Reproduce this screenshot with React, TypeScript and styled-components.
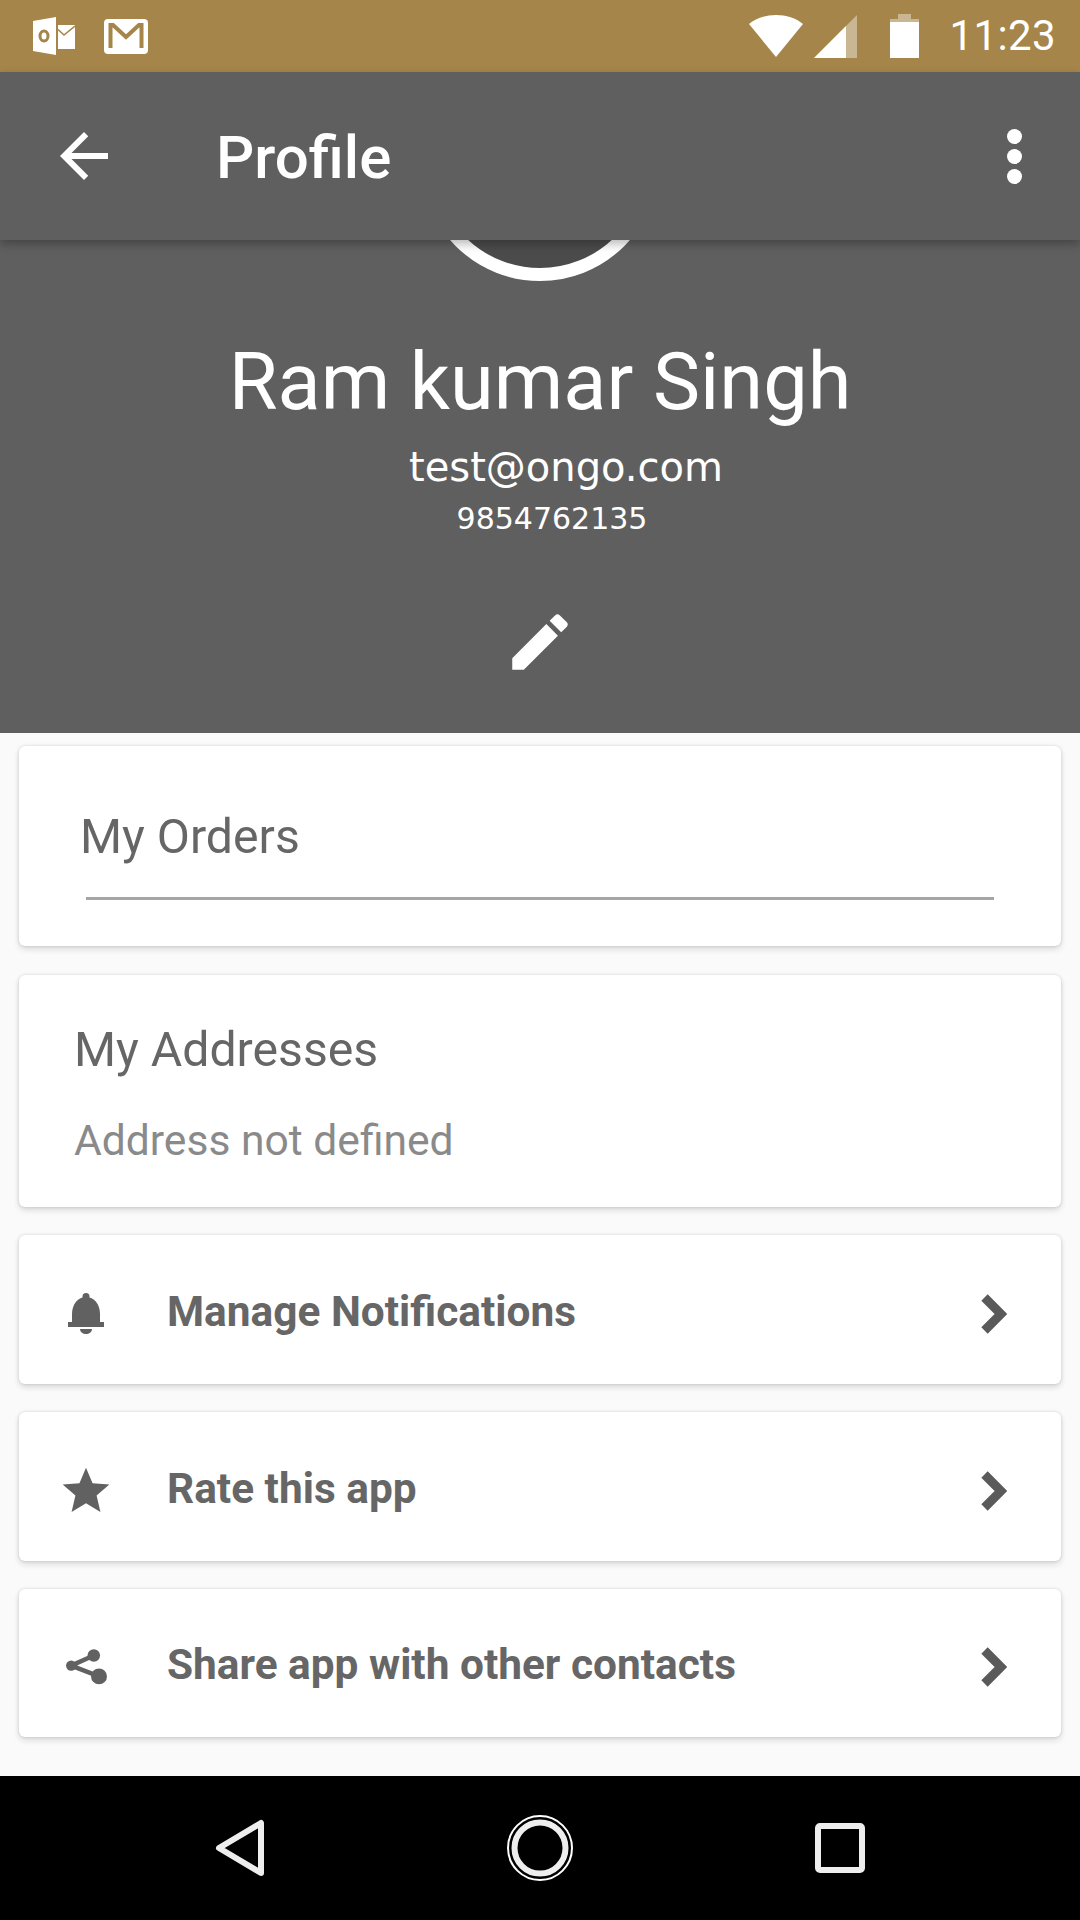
import React from "react";
import styled, { createGlobalStyle } from "styled-components";

const GlobalStyle = createGlobalStyle`
  html, body {
    margin: 0;
    padding: 0;
    background: #fafafa;
  }
  * {
    box-sizing: border-box;
  }
`;

const Page = styled.div`
  width: 1080px;
  height: 1920px;
  display: flex;
  flex-direction: column;
  overflow: hidden;
  background: #fafafa;
  font-family: Roboto, "Liberation Sans", sans-serif;
`;

const StatusBar = styled.div`
  height: 72px;
  flex: none;
  display: flex;
  align-items: center;
  padding: 0 24px 0 33px;
  background: #a5854a;
  color: #fff;
`;

const NotificationIcons = styled.div`
  display: flex;
  align-items: center;
  gap: 29px;
  flex: 1;
`;

const SystemIcons = styled.div`
  display: flex;
  align-items: center;
`;

const Clock = styled.span`
  margin-left: 30px;
  font-size: 42px;
  line-height: 48px;
  letter-spacing: 0.4px;
`;

const Toolbar = styled.div`
  position: relative;
  z-index: 1;
  height: 168px;
  flex: none;
  display: flex;
  align-items: center;
  padding: 0 58px 0 48px;
  background: #5f5f5f;
  box-shadow: 0 4px 9px rgba(0, 0, 0, 0.28);
  color: #fff;
`;

const ToolbarTitle = styled.h1`
  flex: 1;
  margin: 4px 0 0 96px;
  font-size: 60px;
  font-weight: 500;
  line-height: 68px;
`;

const MenuDots = styled.div`
  display: flex;
  flex-direction: column;
  gap: 5px;
`;

const Dot = styled.span`
  width: 15px;
  height: 15px;
  border-radius: 50%;
  background: #fff;
`;

const ProfileHeader = styled.div`
  height: 493px;
  flex: none;
  display: flex;
  flex-direction: column;
  align-items: center;
  overflow: hidden;
  background: #5f5f5f;
  color: #fff;
`;

const Avatar = styled.div`
  width: 238px;
  height: 238px;
  flex: none;
  margin-top: -197px;
  border: 13px solid #fff;
  border-radius: 50%;
  background: #4b4b4b;
`;

const Name = styled.div`
  margin-top: 55px;
  font-size: 79.3px;
  line-height: 92px;
`;

const Email = styled.div`
  margin: 16px 0 0 52px;
  font-family: "DejaVu Sans", sans-serif;
  font-size: 40px;
  line-height: 46px;
`;

const Phone = styled.div`
  margin: 9px 0 0 24px;
  font-family: "DejaVu Sans", sans-serif;
  font-size: 30px;
  line-height: 40px;
`;

const EditButton = styled.div`
  margin-top: 66px;
  display: flex;
`;

const CardList = styled.div`
  flex: 1;
  display: flex;
  flex-direction: column;
  padding: 13px 19px 0 19px;
`;

const Card = styled.div<{ $height: number; $gap: number }>`
  height: ${(p) => p.$height}px;
  flex: none;
  margin-bottom: ${(p) => p.$gap}px;
  border-radius: 6px;
  background: #fff;
  box-shadow: 0 3px 6px rgba(0, 0, 0, 0.14), 0 0 3px rgba(0, 0, 0, 0.14);
`;

const OrdersCard = styled(Card)`
  padding: 63px 67px 0 61px;
`;

const CardTitle = styled.div`
  font-size: 48.2px;
  line-height: 56px;
  color: #666;
`;

const OrdersRule = styled.div`
  height: 3px;
  margin: 32px 0 0 6px;
  background: #a5a5a5;
`;

const AddressCard = styled(Card)`
  padding: 47px 40px 0 55px;
`;

const AddressText = styled.div`
  margin-top: 37px;
  font-size: 42.6px;
  line-height: 50px;
  color: #8a8a8a;
`;

const RowCard = styled(Card)`
  display: flex;
  align-items: center;
`;

const RowIcon = styled.div`
  width: 148px;
  padding: 8px 14px 0 0;
  flex: none;
  display: flex;
  justify-content: center;
`;

const RowLabel = styled.div`
  flex: 1;
  padding-top: 4px;
  font-size: 42.4px;
  font-weight: 700;
  line-height: 50px;
  color: #666;
`;

const RowChevron = styled.div`
  width: 135px;
  padding-top: 8px;
  flex: none;
  display: flex;
  justify-content: center;
`;

const NavBar = styled.div`
  height: 144px;
  flex: none;
  display: flex;
  align-items: center;
  padding: 0 215px 0 215px;
  justify-content: space-between;
  background: #000;
`;

const BellIcon = () => (
  <svg width="36" height="41" viewBox="0 0 36 41">
    <circle cx="18" cy="3.5" r="3.5" fill="#616161" />
    <path d="M4 29V21C4 11 10 4 18 4s14 7 14 17v8z" fill="#616161" />
    <rect y="29" width="36" height="5" fill="#616161" />
    <path d="M12 36h12c0 3-3 5-6 5s-6-2-6-5z" fill="#616161" />
  </svg>
);

const StarIcon = () => (
  <svg width="56" height="56" viewBox="0 0 24 24" fill="#616161">
    <path d="M12 17.27L18.18 21l-1.64-7.03L22 9.24l-7.19-.61L12 2 9.19 8.63 2 9.24l5.46 4.73L5.82 21z" />
  </svg>
);

const ShareIcon = () => (
  <svg width="41" height="36" viewBox="0 0 118 102" fill="#616161">
    <path d="M15 47L80 18M15 47L95 78" stroke="#616161" strokeWidth="13" />
    <circle cx="15" cy="47" r="15" />
    <circle cx="80" cy="18" r="18" />
    <circle cx="95" cy="78" r="23" />
  </svg>
);

const Chevron = () => (
  <svg width="26" height="40" viewBox="0 0 26 40">
    <path d="M3.5 3.5L20 20 3.5 36.5" fill="none" stroke="#5a5a5a" strokeWidth="9" />
  </svg>
);

const OutlookIcon = () => (
  <svg width="42" height="38" viewBox="0 0 42 38">
    <path d="M0 4L23 0V38L0 34z" fill="#fff" />
    <ellipse cx="11" cy="19" rx="4" ry="5" fill="none" stroke="#a5854a" strokeWidth="3" />
    <path d="M25 8H42V32H25z" fill="#fff" />
    <path d="M25 12.5L31 18 42 9" fill="none" stroke="#a5854a" strokeWidth="1.6" />
  </svg>
);

const GmailIcon = () => (
  <svg width="44" height="35" viewBox="0 0 44 35">
    <rect width="44" height="35" rx="4" fill="#fff" />
    <path d="M6.5 29V6H9L22 18 35 6h2.5v23" fill="none" stroke="#a5854a" strokeWidth="4" />
  </svg>
);

const WifiIcon = () => (
  <svg width="54" height="42" viewBox="0 0 54 42">
    <path d="M27 42L0 9C7 3 17 0 27 0s20 3 27 9z" fill="#fff" />
  </svg>
);

const SignalIcon = () => (
  <svg width="43" height="43" viewBox="0 0 43 43" style={{ marginLeft: 11 }}>
    <path d="M0 43L43 0V43z" fill="#fff" fillOpacity="0.4" />
    <path d="M0 43L32 11V43z" fill="#fff" />
  </svg>
);

const BatteryIcon = () => (
  <svg width="29" height="44" viewBox="0 0 29 44" style={{ marginLeft: 33 }}>
    <path d="M8 0h13v5h8v6H0V5h8z" fill="#fff" fillOpacity="0.4" />
    <rect y="8" width="29" height="36" fill="#fff" />
  </svg>
);

const BackNavIcon = () => (
  <svg width="50" height="58" viewBox="0 0 50 58">
    <path d="M46 4V54L4 29z" fill="none" stroke="#eee" strokeWidth="6" strokeLinejoin="round" />
  </svg>
);

const HomeNavIcon = () => (
  <svg width="66" height="66" viewBox="0 0 66 66">
    <circle cx="33" cy="33" r="32" fill="none" stroke="#fff" strokeWidth="2" />
    <circle cx="33" cy="33" r="25.5" fill="none" stroke="#eee" strokeWidth="6" />
  </svg>
);

const RecentNavIcon = () => (
  <svg width="50" height="50" viewBox="0 0 50 50">
    <rect x="3" y="3" width="44" height="44" rx="2" fill="none" stroke="#eee" strokeWidth="6" />
  </svg>
);

const ROWS = [
  { label: "Manage Notifications", icon: <BellIcon />, height: 149, gap: 28 },
  { label: "Rate this app", icon: <StarIcon />, height: 149, gap: 28 },
  { label: "Share app with other contacts", icon: <ShareIcon />, height: 148, gap: 0 },
];

const App = () => (
  <Page>
    <GlobalStyle />
    <StatusBar>
      <NotificationIcons>
        <OutlookIcon />
        <GmailIcon />
      </NotificationIcons>
      <SystemIcons>
        <WifiIcon />
        <SignalIcon />
        <BatteryIcon />
        <Clock>11:23</Clock>
      </SystemIcons>
    </StatusBar>
    <Toolbar>
      <svg width="72" height="72" viewBox="0 0 24 24" fill="#fff">
        <path d="M20 11H7.83l5.59-5.59L12 4l-8 8 8 8 1.41-1.41L7.83 13H20v-2z" />
      </svg>
      <ToolbarTitle>Profile</ToolbarTitle>
      <MenuDots>
        <Dot />
        <Dot />
        <Dot />
      </MenuDots>
    </Toolbar>
    <ProfileHeader>
      <Avatar />
      <Name>Ram kumar Singh</Name>
      <Email>test@ongo.com</Email>
      <Phone>9854762135</Phone>
      <EditButton>
        <svg width="74" height="74" viewBox="0 0 24 24" fill="#fff">
          <path d="M3 17.25V21h3.75L17.81 9.94l-3.75-3.75L3 17.25zM20.71 7.04c.39-.39.39-1.02 0-1.41l-2.34-2.34c-.39-.39-1.02-.39-1.41 0l-1.83 1.83 3.75 3.75 1.83-1.83z" />
        </svg>
      </EditButton>
    </ProfileHeader>
    <CardList>
      <OrdersCard $height={200} $gap={29}>
        <CardTitle>My Orders</CardTitle>
        <OrdersRule />
      </OrdersCard>
      <AddressCard $height={232} $gap={28}>
        <CardTitle>My Addresses</CardTitle>
        <AddressText>Address not defined</AddressText>
      </AddressCard>
      {ROWS.map((row) => (
        <RowCard key={row.label} $height={row.height} $gap={row.gap}>
          <RowIcon>{row.icon}</RowIcon>
          <RowLabel>{row.label}</RowLabel>
          <RowChevron>
            <Chevron />
          </RowChevron>
        </RowCard>
      ))}
    </CardList>
    <NavBar>
      <BackNavIcon />
      <HomeNavIcon />
      <RecentNavIcon />
    </NavBar>
  </Page>
);

export default App;
